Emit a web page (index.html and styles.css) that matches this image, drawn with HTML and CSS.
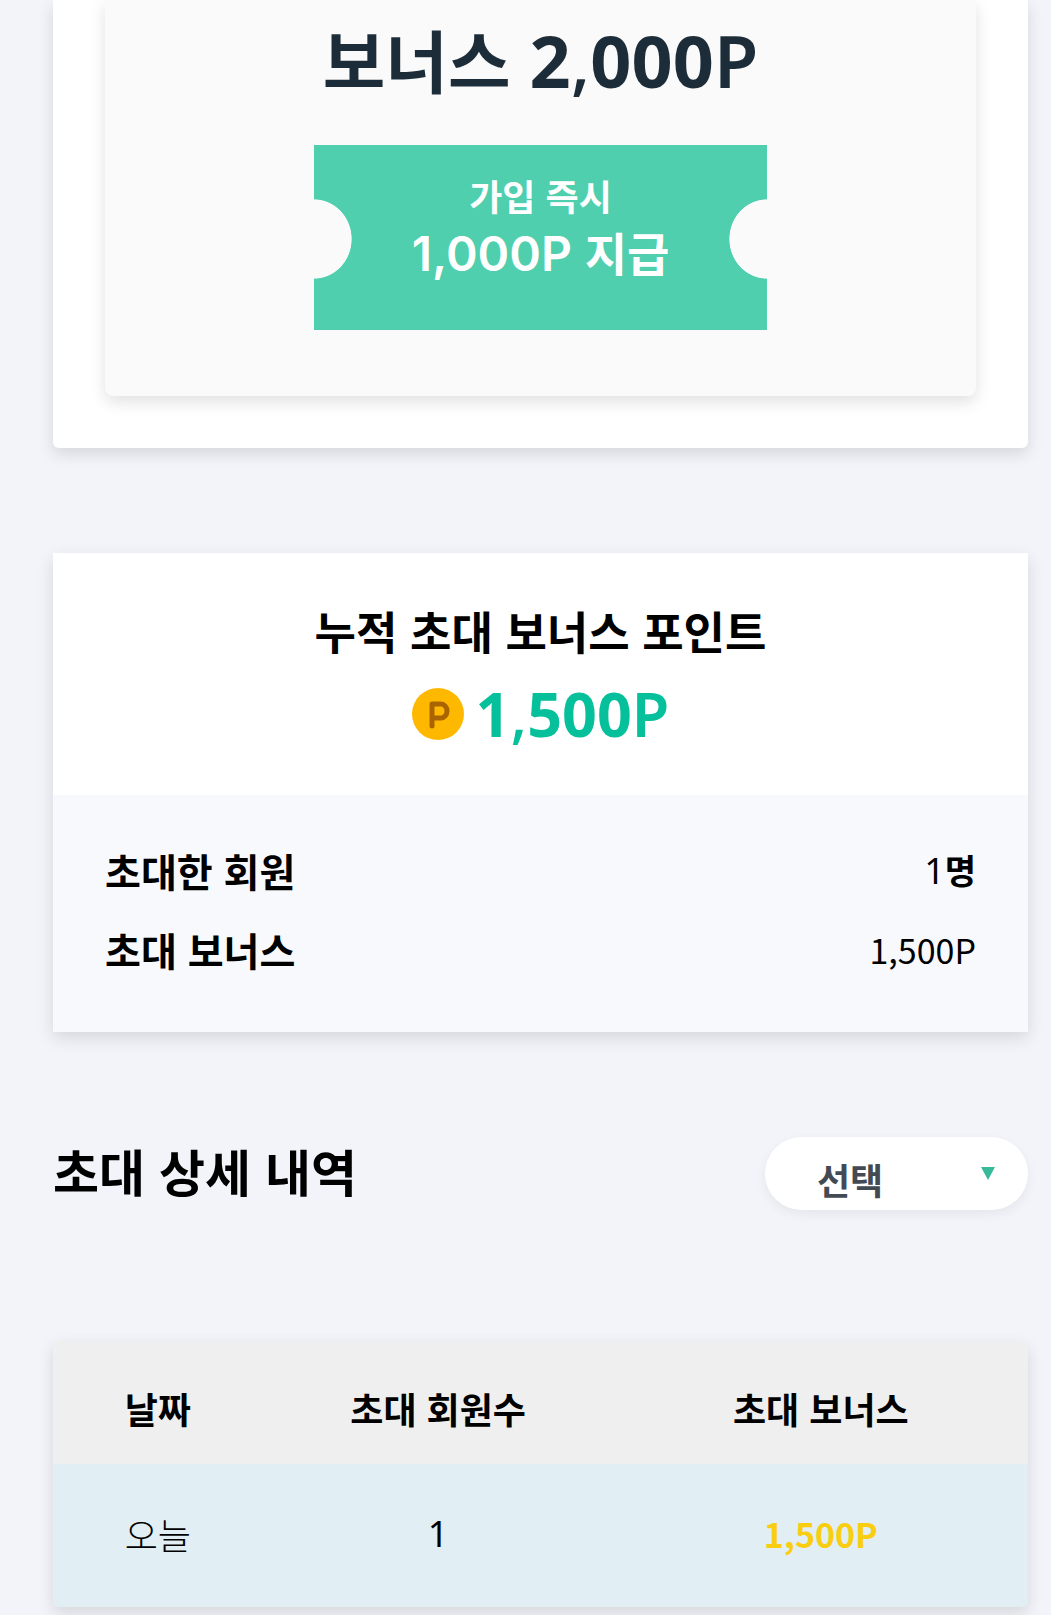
FILE: index.html
```html
<!DOCTYPE html>
<html lang="ko">

<head>
  <meta charset="UTF-8" />
  <meta name="viewport" content="width=device-width, initial-scale=1.0" />
  <title>친구 초대</title>
  <link rel="stylesheet" href="styles.css">
</head>

<body>
  <main class="page">

    <section class="card event">
      <div class="event-box">
        <h1>보너스 <span class="num">2<span class="comma">,</span>000<span class="thin">P</span></span></h1>
        <div class="ticket">
          <p class="ticket-label">가입 즉시</p>
          <p class="ticket-point"><span class="wide">1,000P</span> 지급</p>
        </div>
      </div>
    </section>

    <section class="card summary">
      <div class="total">
        <h2>누적 초대 보너스 포인트</h2>
        <p class="total-point">
          <svg class="coin" viewBox="0 0 52 52" aria-hidden="true">
            <circle cx="26" cy="26" r="26" fill="#ffb800" />
            <path d="M20 38V16h9a6 7 0 0 1 0 14h-9" fill="none" stroke="#a96400" stroke-width="5" stroke-linecap="round" stroke-linejoin="round" />
          </svg>
          <span class="num">1<span class="comma">,</span>500<span class="thin">P</span></span>
        </p>
      </div>
      <dl class="detail">
        <div class="detail-row">
          <dt>초대한 회원</dt>
          <dd><span class="light">1</span><span class="unit">명</span></dd>
        </div>
        <div class="detail-row">
          <dt>초대 보너스</dt>
          <dd>1,500P</dd>
        </div>
      </dl>
    </section>

    <div class="list-head">
      <h2>초대 상세 내역</h2>
      <div class="select-wrap">
        <select name="period" aria-label="기간 선택">
          <option value="">선택</option>
        </select>
        <svg class="arrow" viewBox="0 0 14 13" aria-hidden="true">
          <path d="M0 0h14L7 13z" fill="#38b99a" />
        </svg>
      </div>
    </div>

    <table class="list">
      <thead>
        <tr>
          <th class="col-date">날짜</th>
          <th class="col-count">초대 회원수</th>
          <th>초대 보너스</th>
        </tr>
      </thead>
      <tbody>
        <tr>
          <td class="date">오늘</td>
          <td class="count">1</td>
          <td class="bonus">1,500P</td>
        </tr>
      </tbody>
    </table>

  </main>
</body>

</html>
```

FILE: styles.css
```css
* {
  box-sizing: border-box;
}

body {
  margin: 0;
  background: #f2f4f9;
  color: #000;
  font-family: "Noto Sans CJK KR", sans-serif;
}

h1,
h2,
p,
dl,
dd {
  margin: 0;
}

.page {
  padding: 0 23px 8px 53px;
}

.card {
  background: #fff;
  box-shadow: 0 6px 16px rgba(0, 0, 0, 0.12);
}

.num {
  font-family: "Noto Sans", sans-serif;
  font-weight: 700;
}

.thin {
  font-weight: 600;
}

.comma {
  font-weight: 500;
}

/* event */
.event {
  padding: 0 52px 52px;
  border-radius: 0 0 6px 6px;
}

.event-box {
  padding: 11px 0 66px;
  border-radius: 0 0 8px 8px;
  background: #fafafa;
  box-shadow: 0 6px 16px rgba(0, 0, 0, 0.12);
  text-align: center;
}

.event-box h1 {
  color: #1c2d39;
  font-size: 68px;
  line-height: 96px;
}

.event-box .num {
  font-size: 72px;
}

.ticket {
  width: 453px;
  height: 185px;
  margin: 37px auto 0;
  padding-top: 24px;
  background:
    radial-gradient(38px 40px at 0 94px, #fafafa 98%, transparent) no-repeat,
    radial-gradient(38px 40px at 100% 94px, #fafafa 98%, transparent) no-repeat,
    #4fcfae;
  color: #fff;
  font-weight: 700;
}

.ticket-label {
  font-size: 36px;
  line-height: 52px;
}

.ticket-point {
  font-size: 46px;
  line-height: 60px;
}

.wide {
  font-family: Inter, sans-serif;
  font-weight: 600;
  font-size: 48px;
}

/* summary */
.summary {
  margin-top: 105px;
}

.total {
  padding: 45px 0 41px;
  text-align: center;
}

.total h2 {
  font-size: 45px;
  line-height: 66px;
}

.total-point {
  display: flex;
  align-items: center;
  justify-content: center;
  gap: 12px;
  margin-top: 10px;
  color: #06bf9b;
  font-size: 61px;
  line-height: 80px;
}

.coin {
  width: 52px;
  height: 52px;
}

.detail {
  padding: 36px 52px 43px;
  background: #f8f9fd;
}

.detail-row {
  display: flex;
  align-items: center;
  justify-content: space-between;
}

.detail dt {
  font-size: 39px;
  font-weight: 700;
  line-height: 79px;
}

.detail dd {
  font-size: 34px;
  line-height: 60px;
}

.light {
  font-family: "Noto Sans", sans-serif;
  font-size: 36px;
}

.unit {
  font-weight: 700;
}

/* list */
.list-head {
  display: flex;
  align-items: flex-start;
  justify-content: space-between;
  margin: 105px 0 131px;
}

.list-head h2 {
  font-size: 50px;
  line-height: 66px;
}

.select-wrap {
  position: relative;
}

.select-wrap select {
  display: block;
  appearance: none;
  width: 263px;
  height: 73px;
  padding: 10px 52px 0;
  border: 0;
  border-radius: 37px;
  background: #fff;
  box-shadow: 0 4px 12px rgba(0, 0, 0, 0.06);
  color: #434a54;
  font-family: inherit;
  font-size: 36px;
  font-weight: 700;
}

.arrow {
  position: absolute;
  top: 30px;
  right: 33px;
  width: 14px;
  height: 13px;
  pointer-events: none;
}

.list {
  width: 100%;
  table-layout: fixed;
  border-collapse: collapse;
  border-radius: 6px;
  overflow: hidden;
  box-shadow: 0 6px 16px rgba(0, 0, 0, 0.12);
  font-size: 36px;
  text-align: center;
}

.list th {
  height: 123px;
  padding: 10px 0 0;
  background: #efefef;
  font-weight: 700;
}

.list td {
  height: 143px;
  padding: 0 0 4px;
  background: #e1eef3;
}

.col-date {
  width: 21.5%;
}

.col-count {
  width: 36%;
}

.list .date {
  font-weight: 300;
}

.list .count {
  font-family: "Noto Sans", sans-serif;
}

.list .bonus {
  color: #f9cd10;
  font-size: 34px;
  font-weight: 700;
}
```
